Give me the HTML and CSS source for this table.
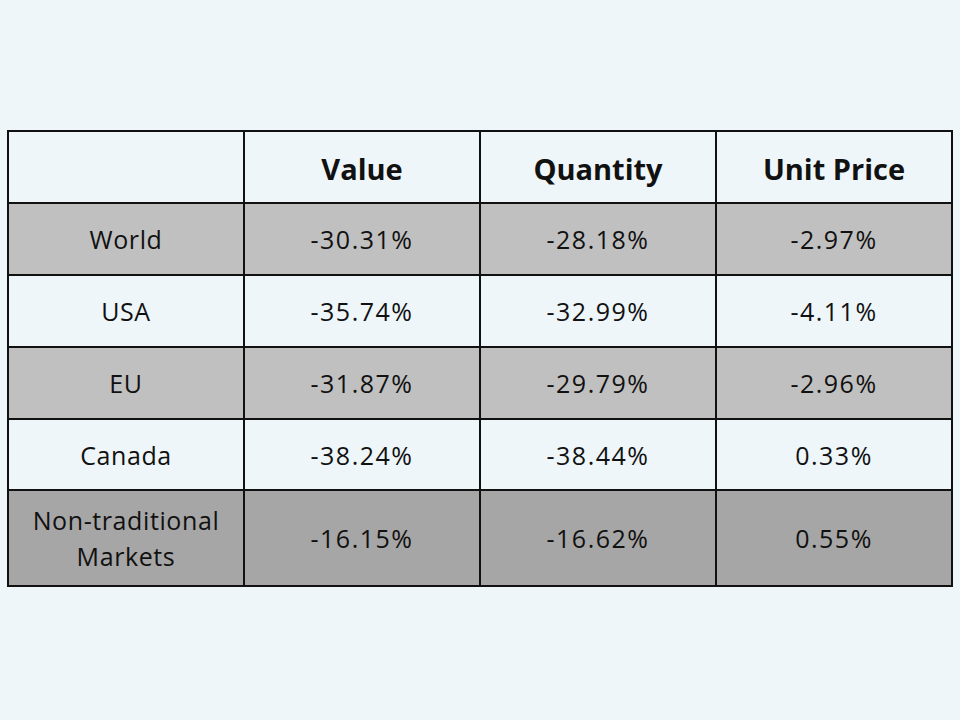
FILE: index.html
```html
<!DOCTYPE html>
<html>
<head>
<meta charset="utf-8">
<link rel="stylesheet" href="styles.css">
</head>
<body>
<div class="slide">
  <table class="data">
    <tr class="head">
      <th></th><th>Value</th><th>Quantity</th><th>Unit Price</th>
    </tr>
    <tr class="grey">
      <td>World</td><td>-30.31%</td><td>-28.18%</td><td>-2.97%</td>
    </tr>
    <tr class="light">
      <td>USA</td><td>-35.74%</td><td>-32.99%</td><td>-4.11%</td>
    </tr>
    <tr class="grey">
      <td>EU</td><td>-31.87%</td><td>-29.79%</td><td>-2.96%</td>
    </tr>
    <tr class="light short">
      <td>Canada</td><td>-38.24%</td><td>-38.44%</td><td>0.33%</td>
    </tr>
    <tr class="dark tall">
      <td>Non-traditional<br>Markets</td><td>-16.15%</td><td>-16.62%</td><td>0.55%</td>
    </tr>
  </table>
</div>
</body>
</html>
```
FILE: styles.css
```css
html, body {
  margin: 0;
  padding: 0;
  background: #eef6f9;
}
.slide {
  width: 960px;
  height: 720px;
  box-sizing: border-box;
  padding: 130px 7px 0 7px;
  font-family: "Open Sans", "Liberation Sans", sans-serif;
  color: #111;
}
.data {
  border-collapse: collapse;
  width: 946px;
  table-layout: fixed;
}
.data th, .data td {
  border: 2px solid #111;
  text-align: center;
  vertical-align: middle;
  padding: 0;
  height: 70px;
  font-size: 25px;
  line-height: 36px;
  letter-spacing: 0.6px;
}
.data td + td {
  letter-spacing: 1.5px;
}
.data th {
  font-weight: 700;
  font-size: 29px;
  padding-top: 3px;
  letter-spacing: 0;
}
.head th { height: 67px; }
.head { background: #eef6f9; }
.grey { background: #c0c0c0; }
.light { background: #eef6f9; }
.dark { background: #a6a6a6; }
.short td { height: 69px; }
.tall td { height: 94px; }
```
